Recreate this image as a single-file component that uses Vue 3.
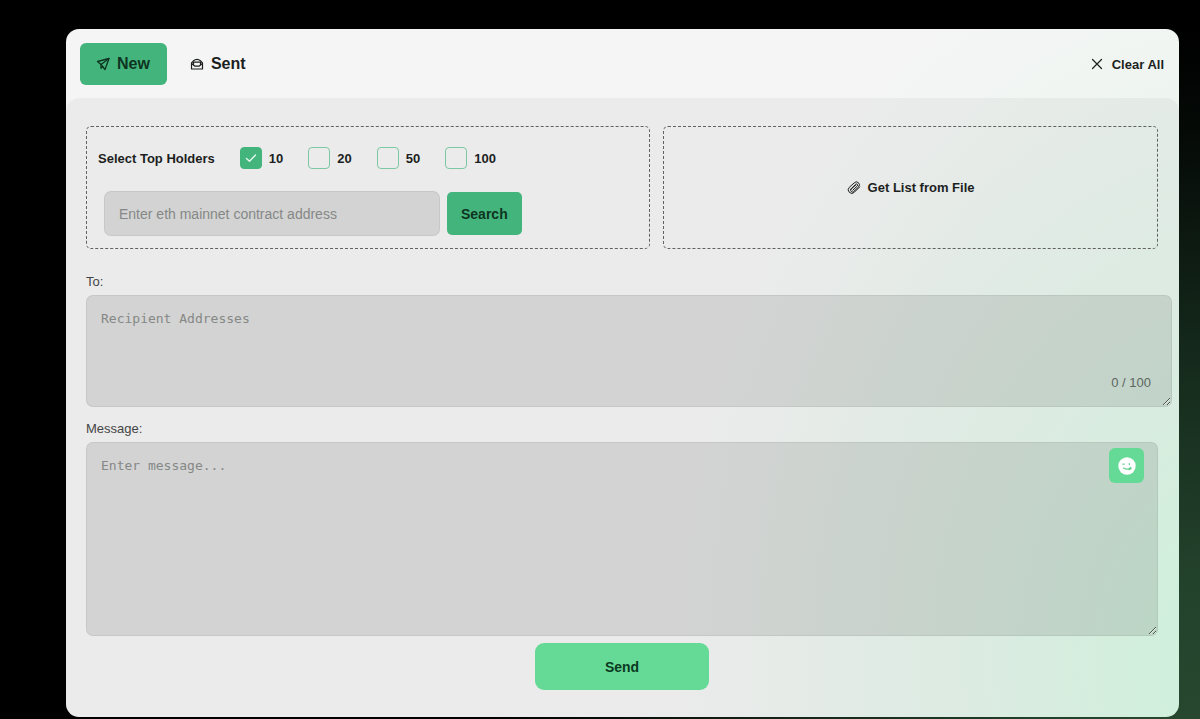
<script setup>
import { ref } from 'vue'

const counts = [10, 20, 50, 100]
const selected = ref([10])
const contract = ref('')
const recipients = ref('')
const message = ref('')

function clearAll() {
  selected.value = []
  contract.value = ''
  recipients.value = ''
  message.value = ''
}
</script>

<template>
  <div class="page">
    <main class="card">
      <header class="bar">
        <nav class="tabs">
          <button type="button" class="tab active">
            <svg width="14" height="14" viewBox="0 0 14 14" fill="none" stroke="currentColor" stroke-width="1.3" stroke-linejoin="round" stroke-linecap="round" aria-hidden="true">
              <path d="M13 1.500 1.500 4.500l3.500 3L9 12.500z" />
              <path d="M13 1.500 5 7.500v3.700l1.800-1.500" />
            </svg>
            New
          </button>
          <button type="button" class="tab">
            <svg width="14" height="14" viewBox="0 0 14 14" fill="none" stroke="currentColor" stroke-width="1.2" stroke-linejoin="round" stroke-linecap="round" aria-hidden="true">
              <path d="M1.500 6 3.500 3.800Q7 .8 10.500 3.800L12.500 6v6h-11z" />
              <path d="M1.500 6.500 5 9.200h4l3.500-2.700" />
              <path d="M3.500 7.500V5.200h7v2.300" />
            </svg>
            Sent
          </button>
        </nav>
        <button type="button" class="clear" @click="clearAll">
          <svg width="12" height="12" viewBox="0 0 12 12" fill="none" stroke="currentColor" stroke-width="1.2" stroke-linecap="round" aria-hidden="true">
            <path d="M1.500 1.500l9 9M10.500 1.500l-9 9" />
          </svg>
          Clear All
        </button>
      </header>

      <form class="body" @submit.prevent>
        <div class="sources">
          <section class="panel holders">
            <div class="choices" role="group" aria-labelledby="holders-title">
              <span id="holders-title" class="title">Select Top Holders</span>
              <label v-for="n in counts" :key="n" class="choice">
                <span class="box">
                  <input v-model="selected" type="checkbox" :value="n" />
                  <svg v-if="selected.includes(n)" width="12" height="12" viewBox="0 0 12 12" fill="none" stroke="#e4f7ed" stroke-width="1.4" stroke-linecap="round" stroke-linejoin="round" aria-hidden="true">
                    <path d="M1.500 6.500 4.500 9.300 10.500 3" />
                  </svg>
                </span>
                {{ n }}
              </label>
            </div>
            <div class="lookup">
              <input v-model="contract" type="text" class="address" placeholder="Enter eth mainnet contract address" aria-label="Contract address" />
              <button type="button" class="search">Search</button>
            </div>
          </section>
          <button type="button" class="panel file">
            <svg width="14" height="14" viewBox="0 0 14 14" fill="none" stroke="currentColor" stroke-width="1" stroke-linecap="round" stroke-linejoin="round" aria-hidden="true">
              <path d="M12.600 6 7.300 11.300a3.500 3.500 0 0 1-5-5L7.200 1.900a2.900 2.900 0 0 1 4.400 4L6.700 10.500a1.700 1.700 0 0 1-2.500-2.400L8.800 4" />
              <path d="M3.400 8.500 8.600 3.300a1.200 1.200 0 0 1 1.700 1.700L5.700 9.300" />
            </svg>
            Get List from File
          </button>
        </div>

        <label class="caption first" for="to">To:</label>
        <div class="field wide">
          <textarea id="to" v-model="recipients" class="to" placeholder="Recipient Addresses"></textarea>
          <span class="count">0 / 100</span>
        </div>

        <label class="caption" for="message">Message:</label>
        <div class="field">
          <textarea id="message" v-model="message" class="message" placeholder="Enter message..."></textarea>
          <button type="button" class="emoji" aria-label="Emoji">
            <svg width="18" height="18" viewBox="0 0 18 18" aria-hidden="true">
              <circle cx="9" cy="9" r="8.700" fill="#fff" />
              <g fill="none" stroke="#63cf91" stroke-width="1.200" stroke-linecap="round">
                <path d="M5 7.200h1.200M11.200 6.500l.3 1M5.500 11c2.500 1.600 5.200 1.400 7.200-.7M11 12.700l2.200-1.200" />
              </g>
            </svg>
          </button>
        </div>

        <button type="submit" class="send">Send</button>
      </form>
    </main>
  </div>
</template>

<style>
body {
  background: #000;
}
</style>

<style scoped>
* {
  box-sizing: border-box;
}

.page {
  min-height: 100vh;
  padding: 29px 21px 2px 66px;
  background: radial-gradient(ellipse 60% 96% at 100% 100%, #27482f 0%, #23422c 20%, #152a1c 52%, #050a07 85%, #000 100%);
  font-family: "Liberation Sans", Arial, sans-serif;
  color: #1c1f1e;
}

button {
  border: 0;
  padding: 0;
  background: none;
  font-family: inherit;
  font-weight: 700;
  color: inherit;
  cursor: pointer;
}

svg {
  display: block;
  flex: none;
}

.card {
  overflow: hidden;
  border-radius: 13px;
  background: radial-gradient(ellipse 52% 112% at 106% 92%, #d7fbe6 0%, #dcf8e7 22%, #e6f5ec 50%, #f0f5f2 80%, #f5f5f5 100%);
}

.bar {
  display: flex;
  align-items: center;
  justify-content: space-between;
  padding: 14px 15px 13px 14px;
}

.tabs {
  display: flex;
  gap: 7px;
}

.tab {
  display: flex;
  align-items: center;
  gap: 7px;
  height: 42px;
  padding: 0 17px 0 16px;
  border-radius: 6px;
  font-size: 16px;
}

.tab.active {
  background: #43b47c;
  color: #0e3521;
}

.clear {
  display: flex;
  align-items: center;
  gap: 9px;
  font-size: 13px;
}

.body {
  display: flex;
  flex-direction: column;
  padding: 28px 21px 27px 20px;
  border-radius: 13px 13px 0 0;
  background: rgba(0, 0, 0, 0.04);
}

.sources {
  display: grid;
  grid-template-columns: 57fr 50fr;
  gap: 13px;
}

.panel {
  border: 1px dashed #606260;
  border-radius: 5px;
}

.holders {
  padding: 20px 11px 12px;
}

.choices {
  display: flex;
  align-items: center;
  gap: 25px;
  font-size: 13px;
  font-weight: 700;
}

.choice {
  display: flex;
  align-items: center;
  gap: 7px;
}

.box {
  display: grid;
  place-items: center;
}

.box > * {
  grid-area: 1 / 1;
}

.box svg {
  z-index: 1;
  pointer-events: none;
}

.box input {
  appearance: none;
  width: 22px;
  height: 22px;
  margin: 0;
  border: 1px solid #7cc8a2;
  border-radius: 4px;
}

.box input:checked {
  border-color: #43b47c;
  background: #43b47c;
}

.lookup {
  display: flex;
  align-items: center;
  gap: 7px;
  margin-top: 22px;
  padding-left: 6px;
}

.address,
textarea {
  display: block;
  margin: 0;
  border: 1px solid rgba(0, 0, 0, 0.06);
  border-radius: 7px;
  background: rgba(0, 0, 0, 0.1);
  color: #333;
}

.address {
  width: 336px;
  height: 45px;
  padding: 0 14px;
  font: 14px "Liberation Sans", Arial, sans-serif;
}

textarea {
  width: 100%;
  padding: 15px 14px;
  font: 13px/16px "DejaVu Sans Mono", monospace;
  resize: vertical;
}

::placeholder {
  color: #858886;
  opacity: 1;
}

.search {
  height: 43px;
  padding: 0 14px;
  border-radius: 5px;
  background: #43b47c;
  color: #0e3521;
  font-size: 14px;
}

.file {
  display: flex;
  align-items: center;
  justify-content: center;
  gap: 7px;
  font-size: 13px;
}

.caption {
  margin: 14px 0 5px;
  font-size: 13px;
  line-height: 16px;
  color: #444;
}

.caption.first {
  margin-top: 25px;
}

.field {
  position: relative;
}

.wide {
  margin-right: -14px;
}

.to {
  height: 112px;
}

.message {
  height: 194px;
}

.count {
  position: absolute;
  right: 21px;
  bottom: 16px;
  font-size: 13px;
  line-height: 16px;
  color: #5d6661;
}

.emoji {
  position: absolute;
  top: 6px;
  right: 14px;
  display: grid;
  place-items: center;
  width: 35px;
  height: 35px;
  border-radius: 6px;
  background: #65d996;
}

.send {
  align-self: center;
  width: 174px;
  height: 47px;
  margin-top: 7px;
  border-radius: 9px;
  background: #65d996;
  color: #0b3a1f;
  font-size: 14px;
}
</style>
